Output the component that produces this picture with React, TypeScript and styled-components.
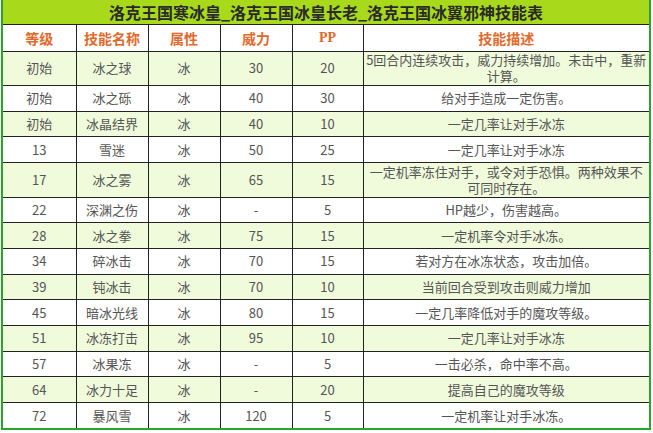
import React from "react";
import styled, { createGlobalStyle } from "styled-components";

const GlobalStyle = createGlobalStyle`
  html, body {
    margin: 0;
    padding: 0;
    background: #fff;
  }
  body {
    font-family: "Noto Sans CJK SC", "Noto Sans", sans-serif;
  }
`;

type Skill = {
  level: string;
  name: string;
  type: string;
  power: string;
  pp: string;
  desc: string;
  tall?: boolean;
};

const skills: Skill[] = [
  { level: "初始", name: "冰之球", type: "冰", power: "30", pp: "20", desc: "5回合内连续攻击，威力持续增加。未击中，重新计算。", tall: true },
  { level: "初始", name: "冰之砾", type: "冰", power: "40", pp: "30", desc: "给对手造成一定伤害。" },
  { level: "初始", name: "冰晶结界", type: "冰", power: "40", pp: "10", desc: "一定几率让对手冰冻" },
  { level: "13", name: "雪迷", type: "冰", power: "50", pp: "25", desc: "一定几率让对手冰冻" },
  { level: "17", name: "冰之雾", type: "冰", power: "65", pp: "15", desc: "一定机率冻住对手，或令对手恐惧。两种效果不可同时存在。", tall: true },
  { level: "22", name: "深渊之伤", type: "冰", power: "-", pp: "5", desc: "HP越少，伤害越高。" },
  { level: "28", name: "冰之拳", type: "冰", power: "75", pp: "15", desc: "一定机率令对手冰冻。" },
  { level: "34", name: "碎冰击", type: "冰", power: "70", pp: "15", desc: "若对方在冰冻状态，攻击加倍。" },
  { level: "39", name: "钝冰击", type: "冰", power: "70", pp: "10", desc: "当前回合受到攻击则威力增加" },
  { level: "45", name: "暗冰光线", type: "冰", power: "80", pp: "15", desc: "一定几率降低对手的魔攻等级。" },
  { level: "51", name: "冰冻打击", type: "冰", power: "95", pp: "10", desc: "一定几率让对手冰冻" },
  { level: "57", name: "冰果冻", type: "冰", power: "-", pp: "5", desc: "一击必杀，命中率不高。" },
  { level: "64", name: "冰力十足", type: "冰", power: "-", pp: "20", desc: "提高自己的魔攻等级" },
  { level: "72", name: "暴风雪", type: "冰", power: "120", pp: "5", desc: "一定机率让对手冰冻。" },
];

const headers = ["等级", "技能名称", "属性", "威力", "PP", "技能描述"];

export default function App() {
  return (
    <>
      <GlobalStyle />
      <Frame>
        <Title>洛克王国寒冰皇_洛克王国冰皇长老_洛克王国冰翼邪神技能表</Title>
        <Table>
          <colgroup>
            <col style={{ width: 73 }} />
            <col style={{ width: 72 }} />
            <col style={{ width: 72 }} />
            <col style={{ width: 72 }} />
            <col style={{ width: 71 }} />
            <col />
          </colgroup>
          <thead>
            <HeadRow>
              {headers.map((h) => (
                <HeadCell key={h}>{h}</HeadCell>
              ))}
            </HeadRow>
          </thead>
          <tbody>
            {skills.map((s, i) => (
              <Row key={i} $shaded={i % 2 === 0} $tall={!!s.tall}>
                <Cell>{s.level}</Cell>
                <Cell>{s.name}</Cell>
                <Cell>{s.type}</Cell>
                <Cell>{s.power}</Cell>
                <Cell>{s.pp}</Cell>
                <DescCell>{s.desc}</DescCell>
              </Row>
            ))}
          </tbody>
        </Table>
      </Frame>
    </>
  );
}

const Frame = styled.div`
  margin-left: 1px;
  width: 650px;
  box-sizing: border-box;
  border: 2px solid #2aa52a;
  border-top: none;
`;

const Title = styled.div`
  height: 24px;
  line-height: 24px;
  background: #a8d91b;
  border-bottom: 1px solid #222;
  text-align: center;
  font-size: 16px;
  font-weight: bold;
  color: #2a2a2a;
  white-space: nowrap;
`;

const Table = styled.table`
  width: 100%;
  table-layout: fixed;
  border-collapse: collapse;
  border-style: hidden;
`;

const HeadRow = styled.tr`
  height: 26px;
  background: #fff;
`;

const HeadCell = styled.th`
  border: 1px solid #222;
  padding: 0;
  font-family: "Liberation Serif", "Noto Sans CJK SC", serif;
  font-size: 14px;
  font-weight: bold;
  color: #e2692c;
  text-align: center;
`;

const Row = styled.tr<{ $shaded: boolean; $tall: boolean }>`
  height: ${(p) => (p.$tall ? "34.5px" : "25.7px")};
  background: ${(p) => (p.$shaded ? "#f0fbdc" : "#fff")};
`;

const Cell = styled.td`
  border: 1px solid #222;
  padding: 0 1px;
  font-size: 13px;
  line-height: 16px;
  color: #555;
  text-align: center;
`;

const DescCell = styled(Cell)`
  padding: 0 1px;
`;
